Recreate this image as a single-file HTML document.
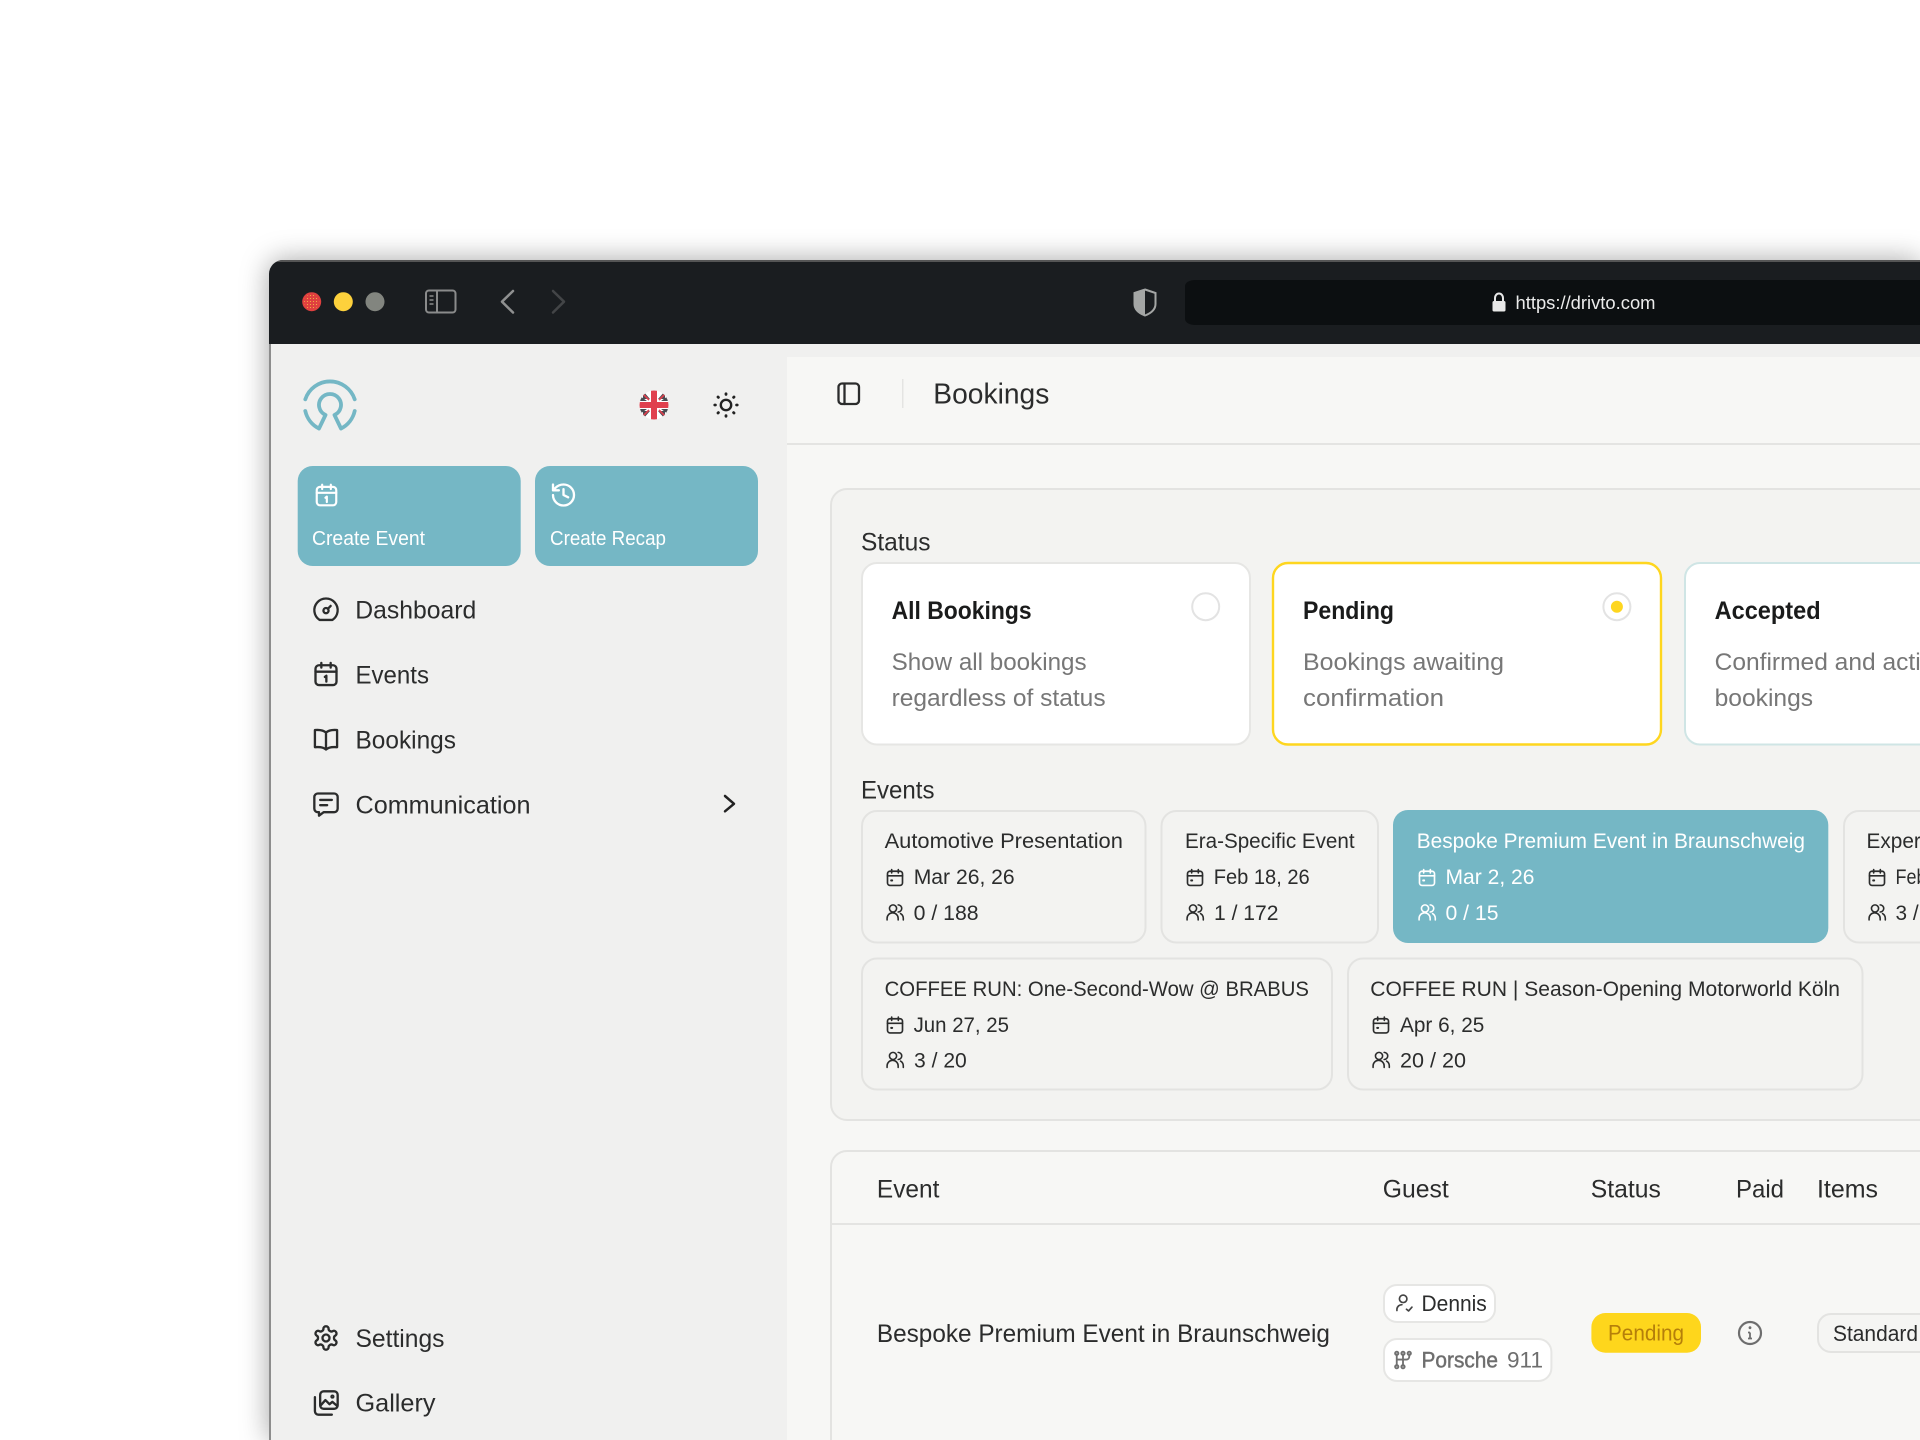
<!DOCTYPE html>
<html lang="en"><head><meta charset="utf-8"><title>Bookings</title>
<style>
html,body{margin:0;padding:0;background:#fff;width:1920px;height:1440px;overflow:hidden}
#p{position:relative;width:1920px;height:1440px;overflow:hidden;background:#fff}
#w{position:absolute;left:269px;top:260px;width:1651px;height:1180px;border-radius:14px 0 0 0;box-shadow:0 0 28px rgba(0,0,0,.36)}
#m{position:absolute;left:0;top:0}
text{font-family:"Liberation Sans",Arial,sans-serif;fill:#2b2c2c}
.n{font-size:25px}.e{font-size:21.5px}.d{font-size:24.5px;fill:#777}.b{font-size:25px;font-weight:700;fill:#1a1b1b}.w{fill:#fff}
.i{fill:none;stroke:#2b2c2c;stroke-width:2;stroke-linecap:round;stroke-linejoin:round}
.iw{stroke:#fff}
.c{fill:#f3f3f1;stroke:#e3e3e1;stroke-width:2}
.s{fill:#fff;stroke:#e6e6e4;stroke-width:2}
</style></head><body>
<div id="p">
<div id="w"></div>
<svg id="m" width="1920" height="1440" viewBox="0 0 1920 1440" xmlns="http://www.w3.org/2000/svg">
<defs>
<pattern id="dots" width="3" height="3" patternUnits="userSpaceOnUse"><circle cx="1.5" cy="1.5" r=".55" fill="#f5c842"/></pattern>
<clipPath id="win"><path d="M283 260H1920V1440H269V274a14 14 0 0 1 14-14z"/></clipPath>
<clipPath id="fl"><circle cx="654" cy="405" r="14.5"/></clipPath>
<symbol id="cal" viewBox="0 0 24 24"><rect x="3" y="4.5" width="18" height="17" rx="3"/><path d="M3 10h18M8 2.5v4M16 2.5v4"/><path d="M7.5 15.5h1" stroke-width="2.6"/></symbol>
<symbol id="cal1" viewBox="0 0 24 24"><rect x="3" y="4.5" width="18" height="17" rx="3"/><path d="M3 10h18M8 2.5v4M16 2.5v4M11 14.5l1.3-1v5"/></symbol>
<symbol id="ppl" viewBox="0 0 24 24"><circle cx="9.5" cy="7.5" r="4.5"/><path d="M2 22v-2a7 7 0 0 1 14 0v2M16 3a4.5 4.5 0 0 1 0 9M22.500 22v-2a7 7 0 0 0-3.500-6"/></symbol>
</defs>

<g clip-path="url(#win)">
<rect x="269" y="260" width="1651" height="1180" fill="#f0f0ef"/>
<rect x="269" y="344" width="2" height="1096" fill="#8d8d8d"/>
<rect x="269" y="260" width="1651" height="84" fill="#1a1d20"/>
<rect x="269" y="260" width="1651" height="2" fill="#555"/>
<rect x="787" y="357" width="1133" height="1083" fill="#f7f7f5"/>
</g>

<!-- traffic lights -->
<circle cx="311.700" cy="301.700" r="9.500" fill="#e0403f"/><circle cx="311.700" cy="301.700" r="7.500" fill="url(#dots)"/>
<circle cx="343.300" cy="301.700" r="9.500" fill="#fdd13c"/>
<circle cx="375" cy="301.700" r="9.500" fill="#82857f"/>
<!-- toolbar sidebar -->
<rect x="426" y="290.500" width="29.500" height="22" rx="3" fill="none" stroke="#8a8b8b" stroke-width="2"/>
<path d="M437 291v21" stroke="#8a8b8b" stroke-width="2"/>
<path d="M429.500 296h4M429.500 300h4M429.500 304h4" stroke="#8a8b8b" stroke-width="1.500"/>
<path d="M513 291l-11 10.700L513 312.500" fill="none" stroke="#8f9090" stroke-width="2.500" stroke-linecap="round" stroke-linejoin="round"/>
<path d="M553 291l11 10.700L553 312.500" fill="none" stroke="#434547" stroke-width="2.500" stroke-linecap="round" stroke-linejoin="round"/>
<!-- shield -->
<path d="M1145 289.500l10.500 3.500v11c0 5-4 9-10.500 11.500c-6.500-2.500-10.500-6.500-10.500-11.500v-11z" fill="none" stroke="#a4a6a5" stroke-width="2"/>
<path d="M1145 289.500l-10.500 3.500v11c0 5 4 9 10.500 11.500z" fill="#a4a6a5"/>
<!-- url -->
<path d="M1195 280H1920V325H1195a10 6 0 0 1-10-6V286a10 6 0 0 1 10-6z" fill="#0c0f11"/>
<rect x="1492.500" y="301" width="13" height="10.500" rx="1.500" fill="#e8e8e8"/>
<path d="M1495 301.500v-3.500a4 4.500 0 0 1 8 0v3.500" fill="none" stroke="#e8e8e8" stroke-width="2"/>
<text x="1515.500" y="309" font-size="18" style="fill:#ececec" textLength="140" lengthAdjust="spacingAndGlyphs">https://drivto.com</text>

<!-- logo -->
<path d="M305.300 399.300A26 26 0 0 1 354.700 399.300M305.300 411A26 26 0 0 0 319 428.500L325.500 415A11 11 0 1 1 334.500 415L341 428.500A26 26 0 0 0 354.700 411" fill="none" stroke="#74b7c5" stroke-width="3.800" stroke-linecap="round" stroke-linejoin="round"/>
<!-- flag -->
<g clip-path="url(#fl)">
<rect x="639" y="390" width="30" height="30" fill="#fff"/>
<path d="M643 391l7 8h-7zM665 391l-7 8h7zM643 419l7-8h-7zM665 419l-7-8h7zM640 396l7 5h-7zM668 396l-7 5h7zM640 414l7-5h-7zM668 414l-7-5h7z" fill="#4a4c52"/>
<path d="M642 393l7 7M666 417l-7-7M659 400l7-7M649 410l-7 7" stroke="#e0404e" stroke-width="1.600"/>
<rect x="651" y="390" width="6" height="30" fill="#e0404e"/><rect x="639" y="402" width="30" height="6" fill="#e0404e"/>
</g>
<!-- sun -->
<circle cx="726" cy="405" r="5.200" fill="none" stroke="#222" stroke-width="2.400"/>
<path d="M726 393.800v.6M726 415.600v.6M714.800 405h.6M736.600 405h.6M718 397l.4.4M733.600 412.600l.4.4M718 413l.4-.4M733.600 397.400l.4-.4" stroke="#222" stroke-width="2.800" stroke-linecap="round"/>

<!-- action buttons -->
<rect x="297.700" y="466" width="223" height="100" rx="15" fill="#75b7c5"/>
<rect x="535" y="466" width="223" height="100" rx="15" fill="#75b7c5"/>
<use href="#cal1" x="313.500" y="482" width="26" height="26" class="i iw"/>
<svg x="549.500" y="481" width="28" height="28" viewBox="0 0 24 24" class="i iw"><path d="M3 12a9 9 0 1 0 9-9 9.750 9.750 0 0 0-6.740 2.740L3 8M3 3v5h5M12 7v5l4 2"/></svg>
<text x="312" y="545" font-size="20.500" class="w" textLength="113" lengthAdjust="spacingAndGlyphs">Create Event</text>
<text x="550" y="545" font-size="20.500" class="w" textLength="116" lengthAdjust="spacingAndGlyphs">Create Recap</text>

<!-- nav icons -->
<svg x="312" y="596" width="28" height="28" viewBox="0 0 24 24" class="i"><path d="M6.500 20.500h11a10 10 0 1 0-11 0z"/><circle cx="12" cy="12.500" r="2.200"/><path d="M13.600 11l2.400-2.500"/></svg>
<use href="#cal1" x="312" y="660" width="28" height="28" class="i"/>
<svg x="312" y="725" width="28" height="28" viewBox="0 0 24 24" class="i"><path d="M12 6.500V21M12 6.500C10 4.500 6 4 2.500 4.300V19c3.500-.3 7.500 0 9.500 2c2-2 6-2.300 9.500-2V4.300C18 4 14 4.500 12 6.500z"/></svg>
<svg x="312" y="790" width="28" height="28" viewBox="0 0 24 24" class="i"><path d="M5 3h14a3 3 0 0 1 3 3v10a3 3 0 0 1-3 3h-9l-4 3v-3H5a3 3 0 0 1-3-3V6a3 3 0 0 1 3-3z"/><path d="M7 8.500h10M7 13h6"/></svg>
<svg x="312" y="1324" width="28" height="28" viewBox="0 0 24 24" class="i"><path d="M12.220 2h-.44a2 2 0 0 0-2 2v.18a2 2 0 0 1-1 1.730l-.43.250a2 2 0 0 1-2 0l-.15-.08a2 2 0 0 0-2.730.730l-.22.380a2 2 0 0 0 .730 2.730l.15.100a2 2 0 0 1 1 1.720v.510a2 2 0 0 1-1 1.740l-.15.090a2 2 0 0 0-.730 2.730l.22.380a2 2 0 0 0 2.730.730l.15-.08a2 2 0 0 1 2 0l.43.250a2 2 0 0 1 1 1.730V20a2 2 0 0 0 2 2h.44a2 2 0 0 0 2-2v-.18a2 2 0 0 1 1-1.730l.43-.25a2 2 0 0 1 2 0l.15.08a2 2 0 0 0 2.730-.730l.22-.39a2 2 0 0 0-.730-2.730l-.15-.08a2 2 0 0 1-1-1.740v-.5a2 2 0 0 1 1-1.740l.15-.09a2 2 0 0 0 .730-2.730l-.22-.38a2 2 0 0 0-2.730-.730l-.15.08a2 2 0 0 1-2 0l-.43-.25a2 2 0 0 1-1-1.730V4a2 2 0 0 0-2-2z"/><circle cx="12" cy="12" r="3"/></svg>
<svg x="312" y="1389" width="28" height="28" viewBox="0 0 24 24" class="i"><rect x="7" y="2" width="15" height="15" rx="3"/><path d="M2.500 7v12a3 3 0 0 0 3 3H17M7.500 14l4-4.500 3.500 3.500 2.500-2 4 3.500"/><circle cx="17.500" cy="6.500" r=".8"/></svg>
<path d="M725 796l9 7.800-9 7.500" fill="none" stroke="#222" stroke-width="2.500" stroke-linecap="round" stroke-linejoin="round"/>

<text x="355.300" y="618.700" class="n" textLength="121" lengthAdjust="spacingAndGlyphs">Dashboard</text>
<text x="355.500" y="683.300" class="n" textLength="73.500" lengthAdjust="spacingAndGlyphs">Events</text>
<text x="355.500" y="748.300" class="n" textLength="100.500" lengthAdjust="spacingAndGlyphs">Bookings</text>
<text x="355.500" y="813.300" class="n" textLength="175" lengthAdjust="spacingAndGlyphs">Communication</text>
<text x="355.500" y="1347" class="n" textLength="89" lengthAdjust="spacingAndGlyphs">Settings</text>
<text x="355.500" y="1411.700" class="n" textLength="80" lengthAdjust="spacingAndGlyphs">Gallery</text>

<!-- header -->
<rect x="838.500" y="383.500" width="20.500" height="20.500" rx="3.500" class="i" style="stroke-width:2.300"/>
<path d="M844.500 384v20" class="i" style="stroke-width:2.300"/>
<rect x="902" y="379" width="1.500" height="29" fill="#e4e4e2"/>
<text x="933.300" y="403.700" font-size="28.500" textLength="116" lengthAdjust="spacingAndGlyphs">Bookings</text>
<rect x="787" y="443" width="1133" height="2" fill="#e4e4e2"/>

<!-- filter card -->
<path d="M1925 489H847a16 16 0 0 0-16 16V1104a16 16 0 0 0 16 16H1925z" fill="#f3f3f1" stroke="#e3e3e1" stroke-width="2"/>
<text x="861" y="550.500" font-size="25" textLength="69.500" lengthAdjust="spacingAndGlyphs">Status</text>
<rect x="862" y="563" width="388" height="181.500" rx="15" class="s"/>
<rect x="1273" y="563" width="388" height="181.500" rx="15" fill="#fff" stroke="#fed61f" stroke-width="2.400"/>
<path d="M1925 563H1700a15 15 0 0 0-15 15V729.500a15 15 0 0 0 15 15H1925z" fill="#fff" stroke="#cfe5e5" stroke-width="2"/>
<text x="891.600" y="619" class="b" textLength="140" lengthAdjust="spacingAndGlyphs">All Bookings</text>
<text x="891.600" y="670" class="d" textLength="195" lengthAdjust="spacingAndGlyphs">Show all bookings</text>
<text x="891.600" y="706" class="d" textLength="214" lengthAdjust="spacingAndGlyphs">regardless of status</text>
<circle cx="1205.700" cy="606.700" r="13.500" fill="#fff" stroke="#e3e3e3" stroke-width="2"/>
<text x="1303" y="619" class="b" textLength="91" lengthAdjust="spacingAndGlyphs">Pending</text>
<text x="1303" y="670" class="d" textLength="201" lengthAdjust="spacingAndGlyphs">Bookings awaiting</text>
<text x="1303" y="706" class="d" textLength="141" lengthAdjust="spacingAndGlyphs">confirmation</text>
<circle cx="1616.900" cy="606.700" r="13.500" fill="#fff" stroke="#e3e3e3" stroke-width="2"/>
<circle cx="1616.900" cy="606.700" r="6" fill="#fed61f"/>
<text x="1714.600" y="619" class="b" textLength="106" lengthAdjust="spacingAndGlyphs">Accepted</text>
<text x="1714.600" y="670" class="d" textLength="232" lengthAdjust="spacingAndGlyphs">Confirmed and active</text>
<text x="1714.600" y="706" class="d" textLength="98.500" lengthAdjust="spacingAndGlyphs">bookings</text>

<text x="861" y="798.700" font-size="25" textLength="73.500" lengthAdjust="spacingAndGlyphs">Events</text>
<!-- event cards -->
<rect x="862" y="811" width="283.500" height="131.500" rx="15" class="c"/>
<rect x="1161.500" y="811" width="216.500" height="131.500" rx="15" class="c"/>
<rect x="1393" y="810" width="435.300" height="133" rx="15" fill="#75b7c5"/>
<path d="M1925 811H1859a15 15 0 0 0-15 15V927.500a15 15 0 0 0 15 15H1925z" class="c"/>
<rect x="862" y="958.500" width="470" height="131" rx="15" class="c"/>
<rect x="1348" y="958.500" width="514.500" height="131" rx="15" class="c"/>

<text x="884.600" y="848.200" class="e" textLength="238.300" lengthAdjust="spacingAndGlyphs">Automotive Presentation</text>
<use href="#cal" x="885" y="867.500" width="20" height="20" class="i"/>
<text x="913.700" y="884" class="e" textLength="101" lengthAdjust="spacingAndGlyphs">Mar 26, 26</text>
<use href="#ppl" x="885" y="902.500" width="20" height="19" class="i"/>
<text x="913.600" y="920" class="e" textLength="65" lengthAdjust="spacingAndGlyphs">0 / 188</text>

<text x="1185" y="848.200" class="e" textLength="169.600" lengthAdjust="spacingAndGlyphs">Era-Specific Event</text>
<use href="#cal" x="1185" y="867.500" width="20" height="20" class="i"/>
<text x="1213.700" y="884" class="e" textLength="96" lengthAdjust="spacingAndGlyphs">Feb 18, 26</text>
<use href="#ppl" x="1185" y="902.500" width="20" height="19" class="i"/>
<text x="1214" y="920" class="e" textLength="64.500" lengthAdjust="spacingAndGlyphs">1 / 172</text>

<text x="1416.700" y="848.200" class="e w" textLength="388.300" lengthAdjust="spacingAndGlyphs">Bespoke Premium Event in Braunschweig</text>
<use href="#cal" x="1417" y="867.500" width="20" height="20" class="i iw"/>
<text x="1445.500" y="884" class="e w" textLength="89" lengthAdjust="spacingAndGlyphs">Mar 2, 26</text>
<use href="#ppl" x="1417" y="902.500" width="20" height="19" class="i iw"/>
<text x="1445.500" y="920" class="e w" textLength="53" lengthAdjust="spacingAndGlyphs">0 / 15</text>

<text x="1866.500" y="848.200" class="e" textLength="104" lengthAdjust="spacingAndGlyphs">Experience</text>
<use href="#cal" x="1867" y="867.500" width="20" height="20" class="i"/>
<text x="1895.500" y="884" class="e" textLength="86" lengthAdjust="spacingAndGlyphs">Feb 10, 26</text>
<use href="#ppl" x="1867" y="902.500" width="20" height="19" class="i"/>
<text x="1895.500" y="920" class="e" textLength="52" lengthAdjust="spacingAndGlyphs">3 / 20</text>

<text x="884.600" y="996" class="e" textLength="424.400" lengthAdjust="spacingAndGlyphs">COFFEE RUN: One-Second-Wow @ BRABUS</text>
<use href="#cal" x="885" y="1015" width="20" height="20" class="i"/>
<text x="913.600" y="1031.800" class="e" textLength="95.400" lengthAdjust="spacingAndGlyphs">Jun 27, 25</text>
<use href="#ppl" x="885" y="1050" width="20" height="19" class="i"/>
<text x="914" y="1067.700" class="e" textLength="52.800" lengthAdjust="spacingAndGlyphs">3 / 20</text>

<text x="1370.300" y="996" class="e" textLength="469.700" lengthAdjust="spacingAndGlyphs">COFFEE RUN | Season-Opening Motorworld Köln</text>
<use href="#cal" x="1371" y="1015" width="20" height="20" class="i"/>
<text x="1400" y="1031.800" class="e" textLength="84.300" lengthAdjust="spacingAndGlyphs">Apr 6, 25</text>
<use href="#ppl" x="1371" y="1050" width="20" height="19" class="i"/>
<text x="1400" y="1067.700" class="e" textLength="66" lengthAdjust="spacingAndGlyphs">20 / 20</text>

<!-- table -->
<path d="M1925 1151H847a16 16 0 0 0-16 16V1445H1925z" fill="#f7f7f5" stroke="#e3e3e1" stroke-width="2"/>
<rect x="832" y="1223" width="1088" height="2" fill="#e4e4e2"/>
<text x="876.900" y="1197.500" class="n" textLength="62.500" lengthAdjust="spacingAndGlyphs">Event</text>
<text x="1382.800" y="1197.500" class="n" textLength="66" lengthAdjust="spacingAndGlyphs">Guest</text>
<text x="1590.800" y="1197.500" class="n" textLength="70" lengthAdjust="spacingAndGlyphs">Status</text>
<text x="1736" y="1197.500" class="n" textLength="48" lengthAdjust="spacingAndGlyphs">Paid</text>
<text x="1817" y="1197.500" class="n" textLength="61" lengthAdjust="spacingAndGlyphs">Items</text>
<text x="876.900" y="1342.200" class="n" textLength="453" lengthAdjust="spacingAndGlyphs">Bespoke Premium Event in Braunschweig</text>

<rect x="1384" y="1285" width="111" height="37" rx="13" class="s"/>
<svg x="1394" y="1292" width="20" height="22" viewBox="0 0 24 24" fill="none" stroke="#444" stroke-width="2" stroke-linecap="round" stroke-linejoin="round"><circle cx="11" cy="7" r="4.500"/><path d="M3.500 21v-2a6 6 0 0 1 6-5M15 19.500l2.500 2 4-4.500"/></svg>
<text x="1421.500" y="1311" font-size="22.500" textLength="65.300" lengthAdjust="spacingAndGlyphs">Dennis</text>
<rect x="1384" y="1339" width="167.400" height="42" rx="13" class="s"/>
<svg x="1393" y="1350" width="20" height="20" viewBox="0 0 24 24" fill="none" stroke="#707070" stroke-width="2.200" stroke-linecap="round"><path d="M4.500 5v14M12 5v14M19.500 5v3a3.500 3.500 0 0 1-3.500 3.500H4.500"/><circle cx="4.500" cy="4" r="2"/><circle cx="12" cy="4" r="2"/><circle cx="19.500" cy="4" r="2"/><circle cx="4.500" cy="20" r="2"/><circle cx="12" cy="20" r="2"/></svg>
<text x="1421.500" y="1367.700" font-size="22.500" style="fill:#6e6e6e;stroke:#6e6e6e;stroke-width:.45" textLength="76.500" lengthAdjust="spacingAndGlyphs">Porsche</text>
<text x="1507" y="1367.700" font-size="22.500" style="fill:#6e6e6e" textLength="36" lengthAdjust="spacingAndGlyphs">911</text>
<rect x="1591.400" y="1313" width="109.600" height="39.700" rx="14" fill="#fed61c"/>
<text x="1608" y="1340.700" font-size="22" style="fill:#b57f0a" textLength="76" lengthAdjust="spacingAndGlyphs">Pending</text>
<circle cx="1750" cy="1333" r="11" fill="none" stroke="#6e6e6e" stroke-width="2.200"/>
<path d="M1750 1332.500v6M1748 1332.500h2M1748 1338.500h4" stroke="#6e6e6e" stroke-width="1.800" fill="none"/><circle cx="1750" cy="1327.700" r="1.400" fill="#6e6e6e"/>
<path d="M1925 1314H1831a13 13 0 0 0-13 13V1339a13 13 0 0 0 13 13H1925z" fill="#f5f5f3" stroke="#e3e3e1" stroke-width="2"/>
<text x="1833" y="1341" font-size="22.500" textLength="85" lengthAdjust="spacingAndGlyphs">Standard</text>
</svg>
</div>
</body></html>
